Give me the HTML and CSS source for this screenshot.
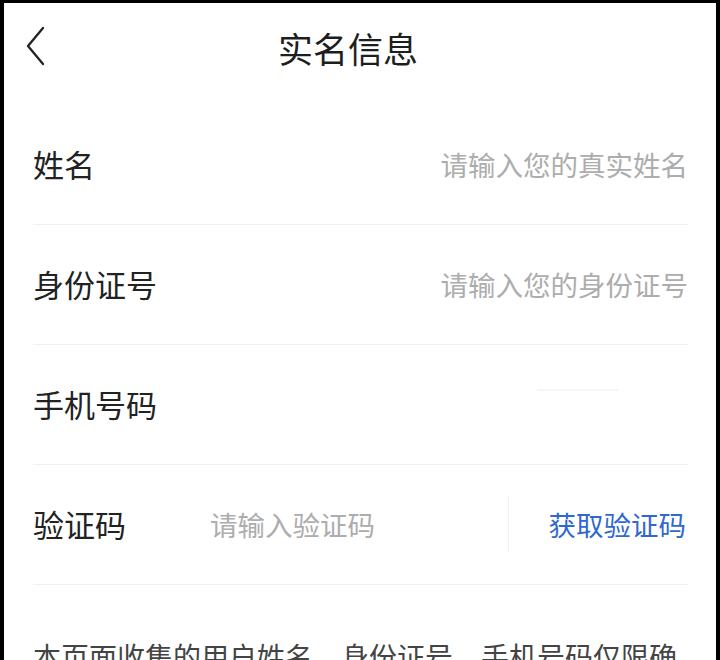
FILE: index.html
```html
<!DOCTYPE html>
<html lang="zh-CN">
<head>
<meta charset="utf-8">
<title>实名信息</title>
<link rel="stylesheet" href="styles.css">
</head>
<body>
<div class="screen">
  <header class="topbar">
    <svg class="back" width="24" height="44" viewBox="0 0 24 44" aria-hidden="true">
      <polyline points="19,3 4,21 19,39" fill="none" stroke="#222" stroke-width="2.3" stroke-linecap="round" stroke-linejoin="round"/>
    </svg>
    <h1 class="title">实名信息</h1>
  </header>
  <main class="form">
    <div class="row">
      <span class="label">姓名</span>
      <span class="placeholder">请输入您的真实姓名</span>
    </div>
    <div class="row">
      <span class="label">身份证号</span>
      <span class="placeholder">请输入您的身份证号</span>
    </div>
    <div class="row">
      <span class="label">手机号码</span>
      <span class="masked"></span>
    </div>
    <div class="row">
      <span class="label label-code">验证码</span>
      <span class="placeholder placeholder-left">请输入验证码</span>
      <span class="vdivider"></span>
      <span class="get-code">获取验证码</span>
    </div>
    <p class="notice">本页面收集的用户姓名、身份证号、手机号码仅限确认用户身份使用</p>
  </main>
</div>
</body>
</html>
```
FILE: styles.css
```css
html, body {
  margin: 0;
  padding: 0;
  height: 100%;
  overflow: hidden;
}
body {
  background: #000;
  font-family: "Noto Sans CJK SC", "Noto Sans", sans-serif;
  color: #222;
}
.screen {
  margin: 3px 4px 0 4px;
  background: #fff;
  height: 657px;
  overflow: hidden;
}
.topbar {
  position: relative;
  height: 88px;
  display: flex;
  align-items: center;
  justify-content: center;
}
.back {
  position: absolute;
  left: 20px;
  top: 22px;
}
.title {
  margin: 0 24px 0 0;
  font-size: 35px;
  font-weight: 400;
  color: #1e1e1e;
}
.form {
  padding: 14px 28px 0 29px;
}
.row {
  height: 119px;
  border-bottom: 1px solid #f1f1f1;
  display: flex;
  align-items: center;
  padding-bottom: 2px;
  box-sizing: border-box;
  height: 120px;
}
.label {
  font-size: 31px;
  color: #222;
  flex: 0 0 auto;
}
.label-code {
  width: 177px;
}
.placeholder {
  margin-left: auto;
  font-size: 27.5px;
  color: #adadad;
}
.placeholder-left {
  margin-left: 0;
  flex: 1;
}
.masked {
  margin-left: auto;
  margin-right: 70px;
  margin-bottom: 28px;
  width: 81px;
  height: 2px;
  background: #f6f6f6;
}
.vdivider {
  width: 1px;
  height: 55px;
  background: #f0f0f0;
  margin-right: 40px;
}
.get-code {
  font-size: 27.5px;
  color: #2f68cf;
  margin-right: 2px;
}
.notice {
  margin: 50px 0 0 0;
  font-size: 28px;
  line-height: 42px;
  color: #444;
}
```
